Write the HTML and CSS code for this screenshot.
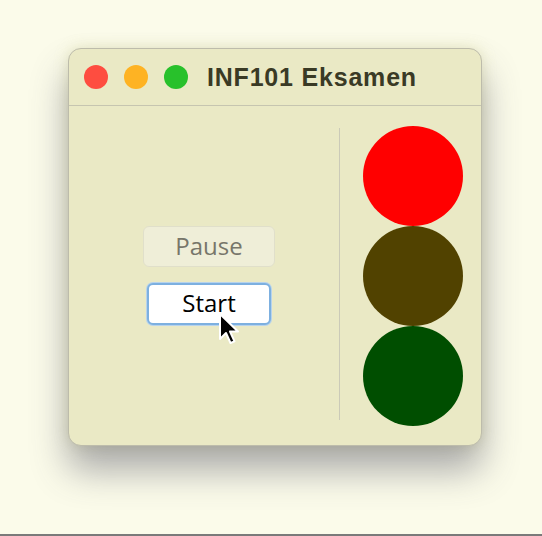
FILE: index.html
```html
<!DOCTYPE html>
<html>
<head>
<meta charset="utf-8">
<link rel="stylesheet" href="styles.css">
</head>
<body>
<div class="stage">
  <div class="window">
    <div class="titlebar">
      <span class="light red"></span>
      <span class="light yellow"></span>
      <span class="light green"></span>
      <span class="title">INF101 Eksamen</span>
    </div>
    <div class="content">
      <div class="controls">
        <button class="btn disabled">Pause</button>
        <div class="start-wrap">
          <button class="btn start">Start</button>
          <svg class="cursor" width="24" height="36" viewBox="0 0 24 36">
            <path d="M2 2 L2 27 L8 21 L12.5 31 L16.5 29.3 L12 19.5 L20 19.5 Z" fill="#000" stroke="#fff" stroke-width="2" stroke-linejoin="round"/>
          </svg>
        </div>
      </div>
      <div class="divider"></div>
      <div class="lamps">
        <div class="lamp lamp-red"></div>
        <div class="lamp lamp-brown"></div>
        <div class="lamp lamp-green"></div>
      </div>
    </div>
  </div>
</div>
<div class="bottom-line"></div>
</body>
</html>
```

FILE: styles.css
```css
html, body {
  margin: 0;
  padding: 0;
}
body {
  width: 542px;
  height: 536px;
  background: #fbfbea;
  font-family: "Liberation Sans", Arial, sans-serif;
  overflow: hidden;
  display: flex;
  flex-direction: column;
}
.stage {
  flex: 1;
  padding: 48px 0 0 68px;
}
.window {
  width: 414px;
  height: 398px;
  box-sizing: border-box;
  background: #eae9c5;
  border: 1px solid #bdbcab;
  border-radius: 13px;
  box-shadow: 0 24px 36px rgba(70, 70, 90, 0.45), 0 0 14px rgba(200, 200, 120, 0.35);
  display: flex;
  flex-direction: column;
  overflow: hidden;
}
.titlebar {
  height: 56px;
  flex: none;
  border-bottom: 1px solid #c6c5b0;
  display: flex;
  align-items: center;
  padding-left: 15px;
}
.light {
  width: 24px;
  height: 24px;
  border-radius: 50%;
  margin-right: 16px;
  flex: none;
}
.light.red { background: #fe4d40; }
.light.yellow { background: #feb323; }
.light.green { background: #28c12b; }
.title {
  margin-left: 3px;
  font-weight: bold;
  font-size: 25px;
  color: #3a3a25;
  letter-spacing: 0.8px;
}
.content {
  flex: 1;
  display: flex;
}
.controls {
  width: 270px;
  box-sizing: border-box;
  padding-left: 10px;
  display: flex;
  flex-direction: column;
  align-items: center;
  justify-content: center;
  gap: 16px;
}
.btn {
  font-family: "Open Sans", "Liberation Sans", sans-serif;
  font-size: 24px;
  font-weight: 500;
  line-height: 1;
  box-sizing: border-box;
  border-radius: 6px;
  padding: 0 0 2px;
  display: flex;
  align-items: center;
  justify-content: center;
}
.btn.disabled {
  width: 132px;
  height: 41px;
  background: #efeed8;
  border: 1px solid #e0dfca;
  color: #77766a;
}
.start-wrap {
  position: relative;
}
.btn.start {
  width: 124px;
  height: 42px;
  background: #ffffff;
  border: 2px solid #7db0e0;
  color: #000;
  box-shadow: 0 0 0 1px #b7d3ec;
}
.cursor {
  position: absolute;
  left: 71px;
  top: 29px;
}
.divider {
  width: 1px;
  background: #cbcab8;
  margin: 22px 0 25px;
}
.lamps {
  padding: 20px 0 0 23px;
  display: flex;
  flex-direction: column;
}
.lamp {
  width: 100px;
  height: 100px;
  border-radius: 50%;
}
.lamp-red { background: #ff0000; }
.lamp-brown { background: #514200; }
.lamp-green { background: #004e00; }
.bottom-line {
  height: 2px;
  background: #7a7a7a;
  flex: none;
}
```
